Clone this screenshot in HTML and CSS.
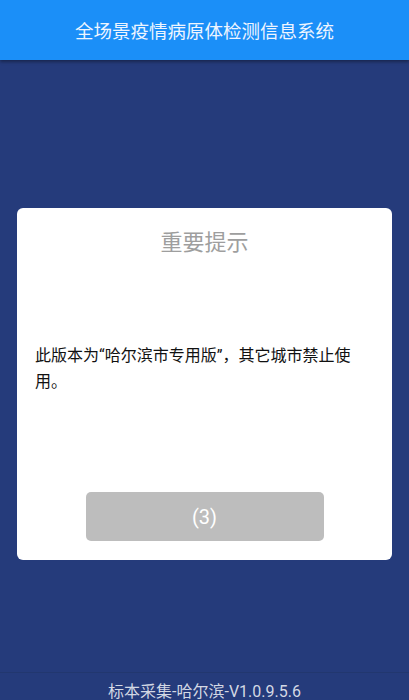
FILE: index.html
```html
<!DOCTYPE html>
<html lang="zh-CN">
<head>
<meta charset="utf-8">
<title>全场景疫情病原体检测信息系统</title>
<link rel="stylesheet" href="styles.css">
</head>
<body>
<div class="page">
  <header class="topbar">全场景疫情病原体检测信息系统</header>
  <main class="main">
    <section class="card">
      <h2 class="card-title">重要提示</h2>
      <p class="card-text">此版本为“哈尔滨市专用版”，其它城市禁止使用。</p>
      <div class="card-actions">
        <button class="btn" type="button">(3)</button>
      </div>
    </section>
  </main>
  <footer class="footer">标本采集-哈尔滨-V1.0.9.5.6</footer>
</div>
</body>
</html>
```
FILE: styles.css
```css
* { box-sizing: border-box; }
html, body {
  margin: 0;
  padding: 0;
  height: 100%;
}
body {
  background: #253b7b;
  font-family: Roboto, "Noto Sans CJK SC", sans-serif;
}
.page {
  display: flex;
  flex-direction: column;
  height: 700px;
}
.topbar {
  height: 60px;
  flex: none;
  background: #1b8ff8;
  color: #eef5ff;
  font-size: 18.5px;
  display: flex;
  align-items: center;
  justify-content: center;
  box-shadow: 0 2px 3px rgba(0,0,0,0.35);
  position: relative;
  z-index: 1;
}
.main {
  flex: 1;
  padding: 148px 17px 0 17px;
}
.card {
  background: #fff;
  border-radius: 6px;
  padding: 20px 35px 19px 18px;
  height: 352px;
  display: flex;
  flex-direction: column;
}
.card-title {
  margin: 0;
  font-weight: normal;
  font-size: 22px;
  line-height: 30px;
  color: #9e9e9e;
  text-align: center;
  padding-left: 17px;
}
.card-text {
  margin: 85px 0 0 0;
  font-size: 16px;
  line-height: 26px;
  color: #111;
}
.card-actions {
  margin-top: auto;
  display: flex;
  justify-content: center;
  padding-left: 17px;
}
.btn {
  width: 238px;
  height: 49px;
  border: none;
  border-radius: 5px;
  background: #bdbdbd;
  color: #fff;
  font-family: Roboto, "Noto Sans CJK SC", sans-serif;
  font-size: 20px;
  padding: 0;
}
.footer {
  height: 28px;
  flex: none;
  border-top: 1px solid #22376f;
  color: #d3d8e4;
  font-size: 16px;
  display: flex;
  align-items: center;
  justify-content: center;
  padding-top: 6px;
}
```
